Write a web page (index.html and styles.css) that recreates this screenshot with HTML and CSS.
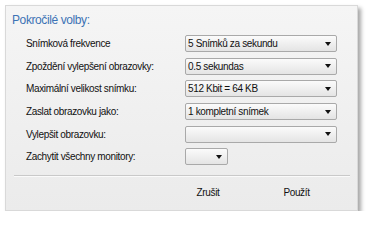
FILE: index.html
```html
<!DOCTYPE html>
<html lang="cs">
<head>
<meta charset="utf-8">
<link rel="stylesheet" href="styles.css">
</head>
<body>
<div class="panel">
  <div class="title">Pokročilé volby:</div>
  <div class="rows">
    <div class="row"><span class="label">Snímková frekvence</span><div class="select"><span>5 Snímků za sekundu</span><i class="arrow"></i></div></div>
    <div class="row"><span class="label">Zpoždění vylepšení obrazovky:</span><div class="select"><span>0.5 sekundas</span><i class="arrow"></i></div></div>
    <div class="row"><span class="label">Maximální velikost snímku:</span><div class="select"><span>512 Kbit = 64 KB</span><i class="arrow"></i></div></div>
    <div class="row"><span class="label">Zaslat obrazovku jako:</span><div class="select"><span>1 kompletní snímek</span><i class="arrow"></i></div></div>
    <div class="row"><span class="label">Vylepšit obrazovku:</span><div class="select"><span></span><i class="arrow"></i></div></div>
    <div class="row"><span class="label">Zachytit všechny monitory:</span><div class="select small"><span></span><i class="arrow"></i></div></div>
  </div>
  <div class="divider"></div>
  <div class="buttons">
    <button class="btn">Zrušit</button>
    <button class="btn">Použít</button>
  </div>
</div>
</body>
</html>
```
FILE: styles.css
```css
html, body {
  margin: 0;
  padding: 0;
  background: #ffffff;
}
body {
  font-family: "Liberation Sans", "DejaVu Sans", sans-serif;
  font-size: 10px;
  letter-spacing: -0.35px;
  color: #111;
}
.panel {
  box-sizing: border-box;
  margin: 5px 0 0 5px;
  width: 353px;
  height: 206px;
  border: 1px solid #d9d9d9;
  background: linear-gradient(#f5f5f5, #ebebeb);
  box-shadow: 3px 3px 4px rgba(0, 0, 0, 0.35);
  display: flex;
  flex-direction: column;
}
.title {
  color: #3c73b5;
  font-size: 12px;
  letter-spacing: -0.4px;
  padding: 7px 0 0 6px;
  height: 19px;
}
.rows {
  display: flex;
  flex-direction: column;
  gap: 5.7px;
  padding: 3px 0 0 20px;
}
.row {
  display: flex;
  align-items: center;
  height: 17px;
}
.label {
  width: 159px;
}
.select {
  box-sizing: border-box;
  width: 152px;
  height: 17px;
  border: 1px solid #a9a9a9;
  border-radius: 2px;
  background: linear-gradient(#fbfbfb, #e4e4e4);
  display: flex;
  align-items: center;
  justify-content: space-between;
  padding: 0 5px 0 2px;
}
.select.small {
  width: 43px;
}
.arrow {
  width: 0;
  height: 0;
  border-left: 3px solid transparent;
  border-right: 3px solid transparent;
  border-top: 4px solid #111;
}
.divider {
  margin: 9.5px 7px 0 8px;
  border-top: 1px solid #c9c9c9;
  border-bottom: 1px solid #fafafa;
}
.buttons {
  display: flex;
  justify-content: flex-end;
  padding: 7px 23px 0 0;
  gap: 13.5px;
}
.btn {
  font-family: "Liberation Sans", "DejaVu Sans", sans-serif;
  font-size: 10px;
  letter-spacing: -0.35px;
  color: #111;
  background: transparent;
  border: none;
  padding: 0;
  width: 75px;
  height: 18px;
}
```
